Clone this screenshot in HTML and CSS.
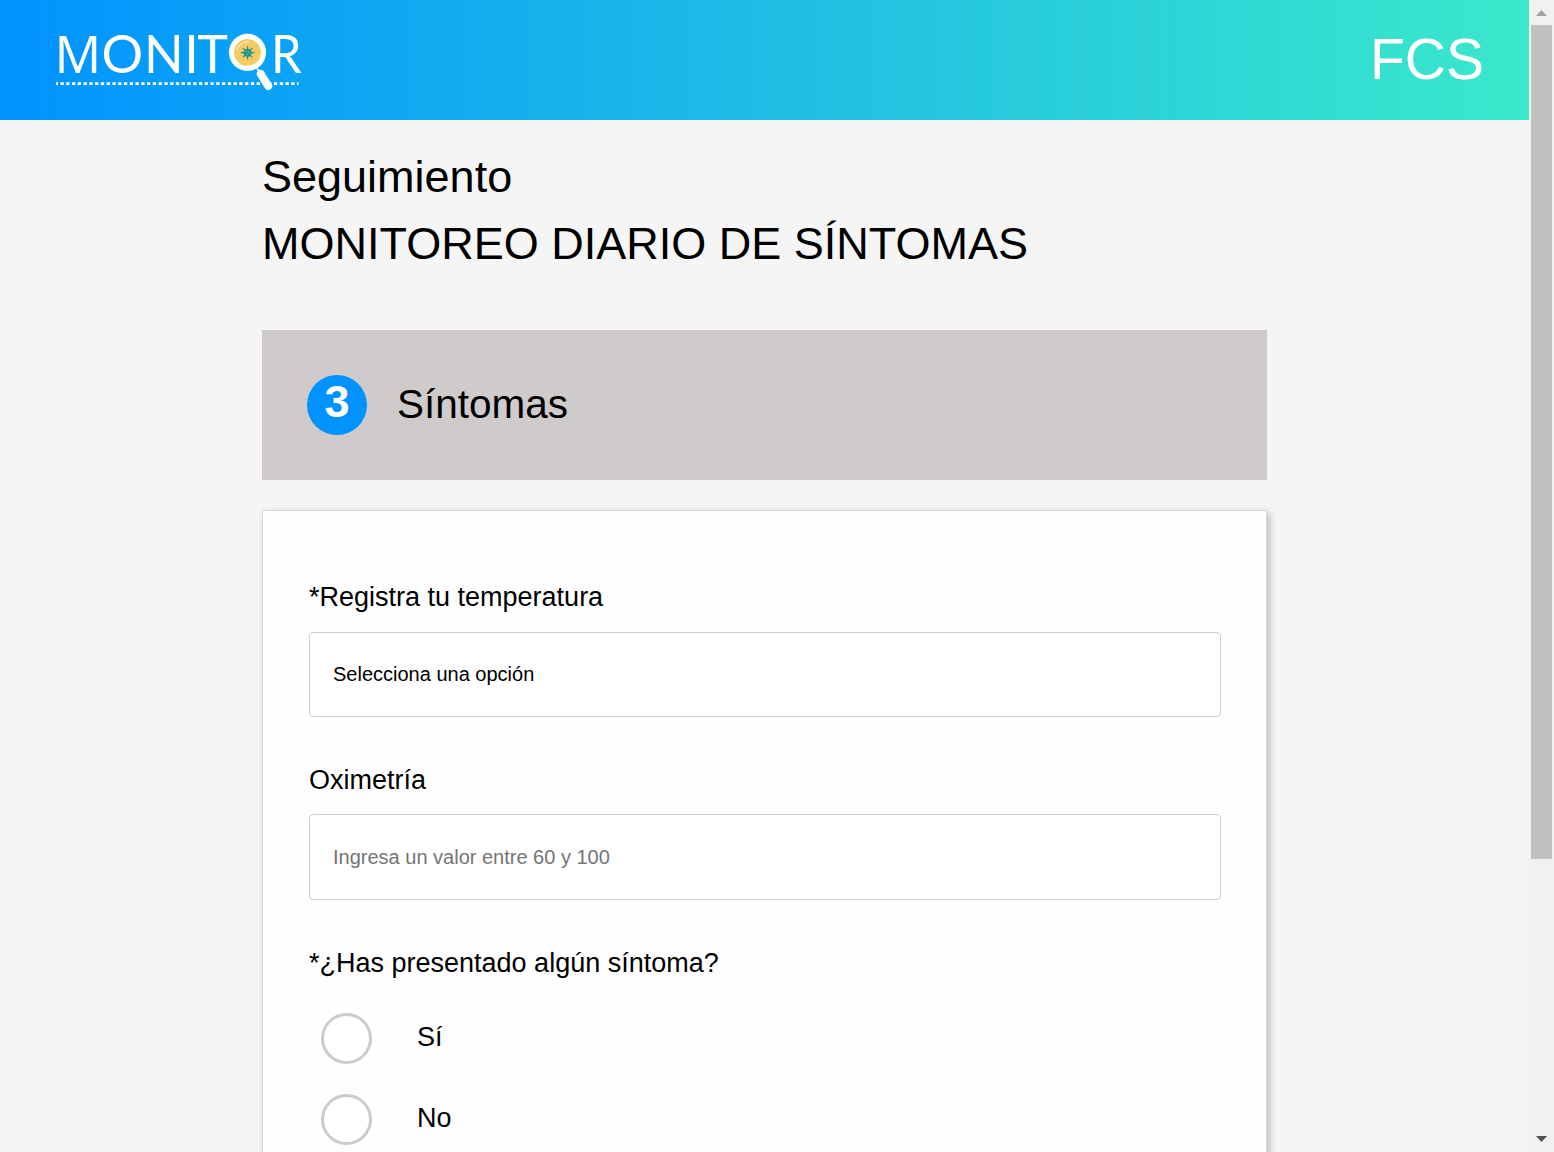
FILE: index.html
```html
<!DOCTYPE html>
<html lang="es">
<head>
<meta charset="utf-8">
<title>Monitor - Seguimiento</title>
<link rel="stylesheet" href="styles.css">
</head>
<body>
<div class="window">
  <div class="page">
    <header class="header">
      <svg class="logo" width="270" height="90" viewBox="50 15 270 90" role="img" aria-label="Monitor">
        <text class="logo-text logo-m" y="72.6" x="54.4">M</text>
        <text class="logo-text" y="72.6" x="101.5 144 184.2 197.3">ONIT</text>
        <text class="logo-text" y="72.6" x="271" textLength="30.6" lengthAdjust="spacingAndGlyphs">R</text>
        <path d="M56 83.6H298.5" stroke="#fff" stroke-width="2.6" stroke-dasharray="3.3 2.47" stroke-dashoffset="1.3"/>
        <path d="M257 68.5l4 5" stroke="#fff" stroke-width="2"/>
        <path d="M260.8 74L268.2 86" stroke="#fff" stroke-width="8" stroke-linecap="round"/>
        <circle cx="247.5" cy="52.4" r="18.6" fill="#fff"/>
        <circle cx="247.5" cy="52.4" r="13.4" fill="#f6ca62"/>
        <path d="M237.3 49.2C238.8 44.8 243 41.6 248.4 41.7" fill="none" stroke="#fff" stroke-width="1" stroke-linecap="round"/>
        <g stroke="#16958a" stroke-width="1.2" stroke-linecap="round">
          <path d="M247.6 46.6v12.2M241.3 52.7h12.6M243.2 48.4l8.8 8.7M252 48.4l-8.8 8.7"/>
        </g>
        <circle cx="247.6" cy="52.7" r="4" fill="#16958a"/>
        <g fill="#7cc9a0"><circle cx="246.2" cy="51.4" r=".8"/><circle cx="248.9" cy="52.2" r=".8"/><circle cx="246.9" cy="54.3" r=".7"/></g>
      </svg>
      <div class="brand">FCS</div>
    </header>
    <main class="content">
      <h1 class="title"><span>Seguimiento</span><span>MONITOREO DIARIO DE SÍNTOMAS</span></h1>
      <div class="step">
        <span class="step-number">3</span>
        <h2 class="step-name">Síntomas</h2>
      </div>
      <form class="card">
        <div class="field">
          <label class="label">*Registra tu temperatura</label>
          <div class="control select">Selecciona una opción</div>
        </div>
        <div class="field">
          <label class="label">Oximetría</label>
          <div class="control placeholder">Ingresa un valor entre 60 y 100</div>
        </div>
        <div class="field">
          <label class="label">*¿Has presentado algún síntoma?</label>
          <div class="options">
            <div class="option"><span class="radio"></span><span>Sí</span></div>
            <div class="option"><span class="radio"></span><span>No</span></div>
          </div>
        </div>
      </form>
    </main>
  </div>
  <div class="scrollbar">
    <svg class="arrow" width="25" height="25" viewBox="0 0 25 25"><path d="M7 16L12.5 10L18 16z" fill="#a3a3a3"/></svg>
    <div class="thumb"></div>
    <svg class="arrow" width="25" height="25" viewBox="0 0 25 25"><path d="M7 9H18L12.5 15z" fill="#505050"/></svg>
  </div>
</div>
</body>
</html>
```
FILE: styles.css
```css
* { box-sizing: border-box; }
body {
  margin: 0;
  font-family: "Liberation Sans", Arial, sans-serif;
  color: #000;
  background: #f5f5f5;
}
.window { display: flex; height: 1152px; overflow: hidden; }
.page { flex: 1; height: 1152px; overflow: hidden; }
.header {
  display: flex;
  justify-content: space-between;
  height: 120px;
  padding: 15px 45px 0 50px;
  background: linear-gradient(to right, #0093ff, #3be8cb);
}
.logo { display: block; overflow: visible; }
.logo-text { font: 52px Lato, sans-serif; fill: #fff; }
.logo-m { font-family: "Open Sans", sans-serif; }
.brand { padding-top: 15px; color: #fff; font-size: 57px; line-height: 58px; }
.content { width: 1005px; margin: 0 auto; }
.title {
  display: flex;
  flex-direction: column;
  gap: 1px;
  margin: 0;
  padding-top: 24px;
  font-size: 45px;
  font-weight: 400;
  line-height: 66px;
}
.step {
  display: flex;
  align-items: center;
  gap: 30px;
  height: 150px;
  margin-top: 53px;
  padding: 0 45px;
  background: #cfcbca;
}
.step-number {
  width: 60px;
  height: 60px;
  border-radius: 50%;
  background: #0093ff;
  color: #fff;
  font-size: 45px;
  font-weight: 700;
  line-height: 54px;
  text-align: center;
}
.step-name { margin: 0; padding-bottom: 2px; font-size: 40.5px; font-weight: 400; line-height: 60px; }
.card {
  height: 900px;
  margin-top: 30px;
  padding: 66px 45px 0 46px;
  border: 1px solid #d8d8d8;
  background: #fefefe;
  box-shadow: 3px 3px 7px rgba(0, 0, 0, .22);
}
.field { margin-bottom: 43px; }
.label { display: block; height: 54px; font-size: 27px; line-height: 40px; }
.field:first-child .label { height: 55px; }
.control {
  height: 86px;
  padding: 0 23px;
  border: 1px solid #cfcbca;
  border-radius: 4px;
  background: #fff;
  font-size: 20px;
  line-height: 84px;
}
.select { height: 85px; line-height: 82px; }
.placeholder { color: #757575; }
.options { display: flex; flex-direction: column; gap: 30px; padding: 16px 12px 0; }
.option { display: flex; gap: 45px; font-size: 27px; line-height: 48px; }
.radio { width: 51px; height: 51px; border: 3px solid #cfcbca; border-radius: 50%; background: #fff; }
.scrollbar { display: flex; flex-direction: column; width: 25px; background: #f1f1f1; }
.arrow { display: block; }
.thumb { height: 834px; margin: 0 2px auto; background: #c1c1c1; }
```
